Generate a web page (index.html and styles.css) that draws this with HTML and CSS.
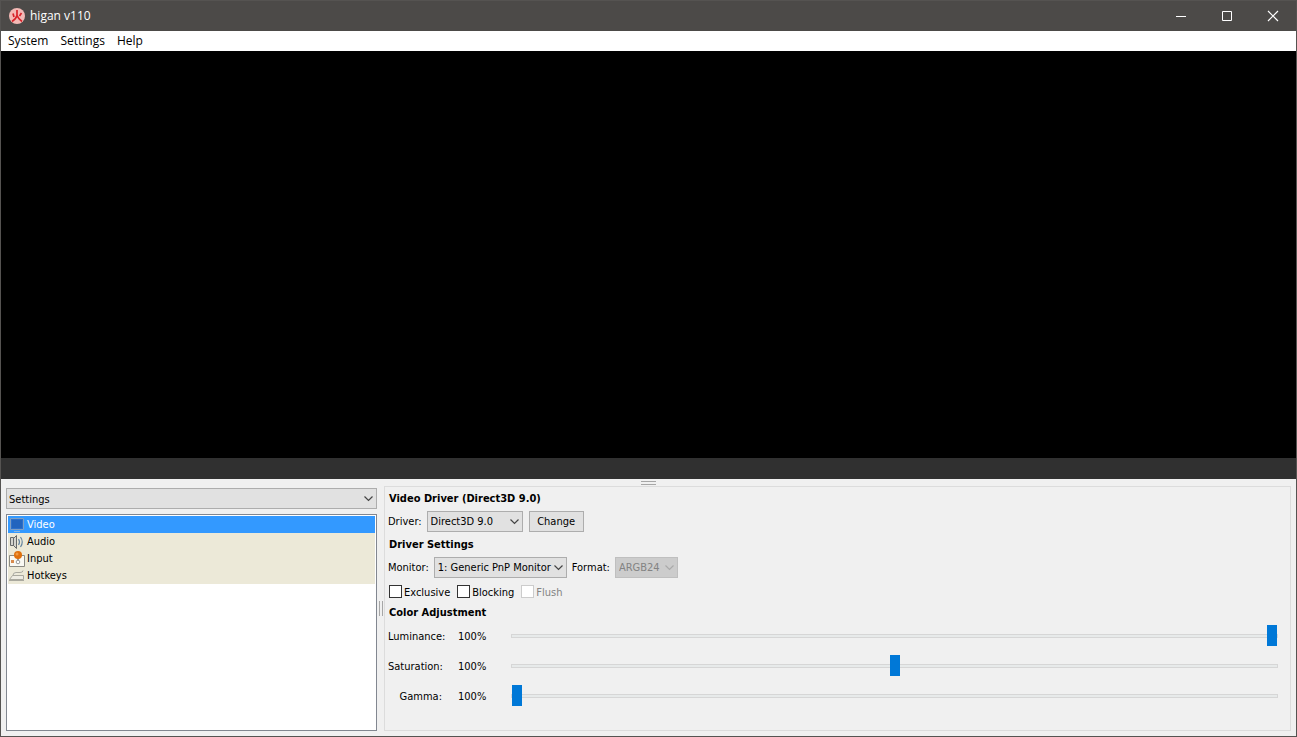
FILE: index.html
```html
<!DOCTYPE html>
<html lang="en">
<head>
<meta charset="utf-8">
<title>higan v110</title>
<link rel="stylesheet" href="styles.css">
</head>
<body>
<div class="window">
  <header class="titlebar">
    <svg class="app-icon" width="16" height="16" viewBox="0 0 16 16"><circle cx="8" cy="8" r="8" fill="#f4b9b5"/><path d="M8 2v5.500Q7 11 3 13.500M8 7.500Q9.500 11 13 13.500M4 5.500l1 3.500M12.500 5l-2 3" fill="none" stroke="#d8232a" stroke-width="1.700"/></svg>
    <h1 class="title">higan v110</h1>
    <div class="window-buttons">
      <button class="window-button" aria-label="Minimize"><svg width="12" height="12"><path d="M1 6.500h10" stroke="#fff"/></svg></button>
      <button class="window-button" aria-label="Maximize"><svg width="12" height="12"><path d="M1.500 1.500h9v9h-9z" fill="none" stroke="#fff"/></svg></button>
      <button class="window-button" aria-label="Close"><svg width="12" height="12"><path d="M1 1l10 10M11 1l-10 10" stroke="#fff" stroke-width="1.200"/></svg></button>
    </div>
  </header>
  <nav class="menubar">
    <button class="menu">System</button>
    <button class="menu">Settings</button>
    <button class="menu">Help</button>
  </nav>
  <main class="viewport"></main>
  <div class="statusbar"></div>
  <section class="tools">
    <div class="grip grip-row"></div>
    <div class="panes">
      <aside class="sidebar">
        <div class="combo combo-wide">
          <select aria-label="Panel"><option>Settings</option></select>
          <svg class="chevron" width="9" height="6"><path d="M.5 .5l4 4 4-4" fill="none" stroke="currentColor" stroke-width="1.200"/></svg>
        </div>
        <ul class="list">
          <li><button class="item item-selected"><svg width="16" height="16"><path d="M1.500 1.500h13v11h-13z" fill="#2c70cc" stroke="#7f9fc4"/><path d="M3 3h10v8H3z" fill="#2264be"/><path d="M5 14.500h6" stroke="#8ab3dd"/></svg>Video</button></li>
          <li><button class="item"><svg width="16" height="16"><path d="M1.500 3.500h3v8h-3zM4.500 4.500l3-3v13l-3-3z" fill="#d4d4ce" stroke="#66696a"/><path d="M9.500 5q2 3 0 6M11.500 3q3.500 5 0 10" fill="none" stroke="#6585a0" stroke-width="1.200"/></svg>Audio</button></li>
          <li><button class="item"><svg width="16" height="16"><path d="M.5 4.500h15v11H.5z" fill="#faf9f3" stroke="#8b8a83"/><path d="M9 7v4" stroke="#999" stroke-width="2"/><circle cx="9" cy="11" r="1.800" fill="#fff" stroke="#999"/><circle cx="9" cy="4" r="4" fill="#df700d"/><circle cx="8" cy="3" r="1.500" fill="#f19a43"/><path d="M2 9h3v3H2z" fill="#d98a4d"/></svg>Input</button></li>
          <li><button class="item"><svg width="16" height="16"><path d="M.5 11.500l3-4h11v4zM4 7.500q0-3 3-3h4q3 0 3-2" fill="#eeece3" stroke="#aaa99f"/><path d="M0 12.500h15" stroke="#aaa99f"/></svg>Hotkeys</button></li>
        </ul>
      </aside>
      <div class="grip grip-column"></div>
      <div class="panel">
        <h2 class="heading">Video Driver (Direct3D 9.0)</h2>
        <div class="row">
          <label for="driver">Driver:</label>
          <div class="combo driver">
            <select id="driver"><option>Direct3D 9.0</option></select>
            <svg class="chevron" width="9" height="6"><path d="M.5 .5l4 4 4-4" fill="none" stroke="currentColor" stroke-width="1.200"/></svg>
          </div>
          <button class="change">Change</button>
        </div>
        <h2 class="heading">Driver Settings</h2>
        <div class="row">
          <label for="monitor">Monitor:</label>
          <div class="combo monitor">
            <select id="monitor"><option>1: Generic PnP Monitor</option></select>
            <svg class="chevron" width="9" height="6"><path d="M.5 .5l4 4 4-4" fill="none" stroke="currentColor" stroke-width="1.200"/></svg>
          </div>
          <label for="format">Format:</label>
          <div class="combo format">
            <select id="format" disabled><option>ARGB24</option></select>
            <svg class="chevron" width="9" height="6"><path d="M.5 .5l4 4 4-4" fill="none" stroke="currentColor" stroke-width="1.200"/></svg>
          </div>
        </div>
        <div class="checks">
          <label class="check"><input type="checkbox">Exclusive</label>
          <label class="check"><input type="checkbox">Blocking</label>
          <label class="check check-off"><input type="checkbox" disabled>Flush</label>
        </div>
        <h2 class="heading heading-tight">Color Adjustment</h2>
        <div class="sliders">
          <label for="luminance">Luminance:</label><output for="luminance">100%</output>
          <input id="luminance" type="range" min="0" max="100" value="100">
          <label for="saturation">Saturation:</label><output for="saturation">100%</output>
          <input id="saturation" type="range" min="0" max="200" value="100">
          <label for="gamma">Gamma:</label><output for="gamma">100%</output>
          <input id="gamma" type="range" min="100" max="200" value="100">
        </div>
      </div>
    </div>
  </section>
</div>
</body>
</html>
```
FILE: styles.css
```css
* { box-sizing: border-box; }
body {
  margin: 0;
  font: 11px/14px "DejaVu Sans Condensed", "DejaVu Sans", sans-serif;
  color: #000;
}
button, select, input { font: inherit; color: inherit; margin: 0; }
svg { display: block; flex: none; }
.window {
  display: flex;
  flex-direction: column;
  min-height: 100vh;
  border: 1px solid #555351;
  background: #f0f0f0;
}
.titlebar {
  display: flex;
  align-items: center;
  height: 30px;
  padding-left: 8px;
  gap: 5px;
  background: #4c4a48;
  color: #fff;
  font-family: "Open Sans", sans-serif;
}
.title { margin: 0; flex: 1; font-size: 12px; font-weight: 400; }
.window-buttons { display: flex; }
.window-button {
  display: flex;
  align-items: center;
  justify-content: center;
  width: 46px;
  height: 28px;
  padding: 0;
  border: 0;
  background: transparent;
}
.menubar { display: flex; height: 20px; padding-left: 1px; background: #fff; }
.menu {
  padding: 0 6px;
  border: 0;
  background: transparent;
  font-family: "Open Sans", sans-serif;
  font-size: 12px;
}
.viewport { flex: 1; background: #000; }
.statusbar { height: 21px; background: #303030; }
.tools { display: flex; flex-direction: column; padding: 0 5px 5px; }
.grip { border: 0 solid #a6a6a6; }
.grip-row {
  align-self: center;
  width: 15px;
  height: 4px;
  margin: 2px 0 1px;
  border-width: 1px 0;
}
.grip-column {
  align-self: center;
  width: 4px;
  height: 15px;
  margin: 0 1px 0 2px;
  border-width: 0 1px;
}
.panes { display: flex; min-height: 245px; }
.sidebar {
  display: flex;
  flex-direction: column;
  flex: 0 0 29%;
  max-width: 371px;
  padding-top: 2px;
  gap: 5px;
}
.combo { position: relative; height: 21px; }
.combo select {
  appearance: none;
  width: 100%;
  height: 100%;
  padding: 2px 12px 0 3px;
  border: 1px solid #adadad;
  border-radius: 0;
  background: #e1e1e1;
}
.combo select:disabled {
  border-color: #bfbfbf;
  background: #ccc;
  color: #838383;
  opacity: 1;
}
.chevron {
  position: absolute;
  top: 8px;
  right: 4px;
  color: #444;
  pointer-events: none;
}
select:disabled + .chevron { color: #aaa; }
.combo-wide select { padding-left: 2px; }
.list {
  flex: 1;
  margin: 0;
  padding: 1px;
  border: 1px solid #828790;
  background: #fff;
  list-style: none;
}
.item {
  display: flex;
  align-items: center;
  gap: 2px;
  width: 100%;
  height: 17px;
  padding: 1px 1px 0;
  border: 0;
  background: #ece9d8;
  text-align: left;
}
.item-selected { background: #39f; color: #fff; }
.panel {
  flex: 1;
  padding: 0 12px 18px 3px;
  border: 1px solid #dcdcdc;
}
.heading {
  margin: 0 0 0 1px;
  padding-top: 2px;
  font-size: 11px;
  line-height: 20px;
}
.heading-tight { line-height: 12px; }
.row { display: flex; align-items: center; gap: 5px; height: 24px; }
.row label, .sliders label, .sliders output { padding-top: 2px; }
.driver { width: 96px; }
.monitor { width: 133px; }
.format { width: 63px; }
.change {
  width: 55px;
  height: 21px;
  margin-left: 1px;
  padding: 1px 0 0;
  border: 1px solid #adadad;
  background: #e1e1e1;
}
.checks { display: flex; align-items: center; gap: 6px; height: 26px; padding-top: 2px; }
.check { display: flex; align-items: flex-start; gap: 2px; line-height: 16px; }
.check input {
  appearance: none;
  width: 13px;
  height: 13px;
  margin-left: 1px;
  border: 1px solid #333;
  background: #fff;
}
.check-off { color: #838383; }
.check-off input { border-color: #ccc; }
.sliders {
  display: grid;
  grid-template-columns: 54px 37px 1fr;
  grid-auto-rows: 30px;
  column-gap: 16px;
  align-items: center;
  padding-top: 2px;
}
.sliders label { text-align: right; }
.sliders input {
  appearance: none;
  width: 100%;
  height: 21px;
  background: transparent;
}
.sliders input::-webkit-slider-runnable-track {
  height: 4px;
  border: 1px solid #d6d6d6;
  background: #e7eaea;
}
.sliders input::-webkit-slider-thumb {
  appearance: none;
  width: 10px;
  height: 21px;
  margin-top: -10px;
  background: #0078d7;
}
```
